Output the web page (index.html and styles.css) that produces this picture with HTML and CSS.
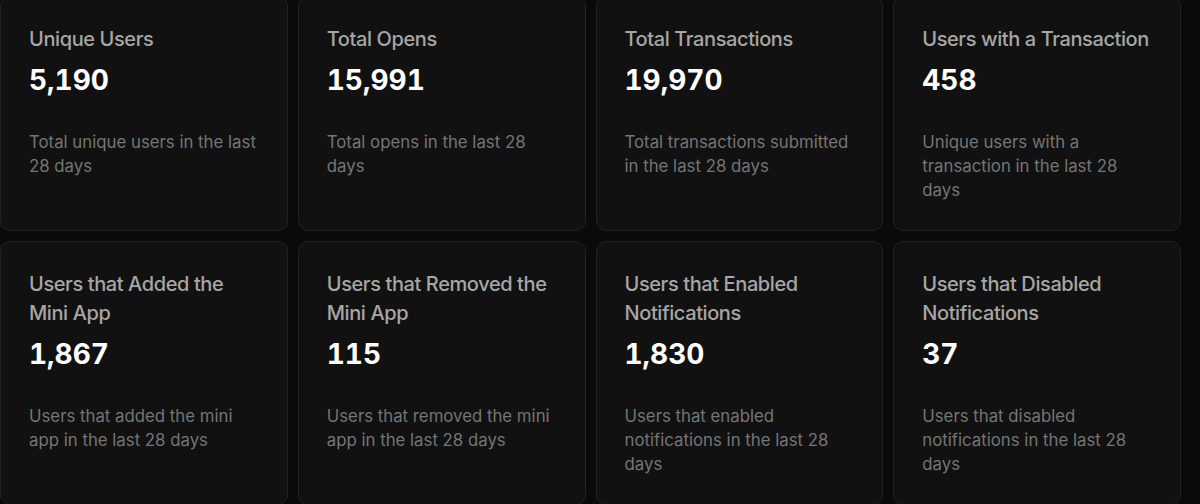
FILE: index.html
```html
<!DOCTYPE html>
<html lang="en">
<head>
<meta charset="utf-8">
<title>Mini App Analytics</title>
<link rel="stylesheet" href="styles.css">
</head>
<body>
<div class="grid">
  <div class="card">
    <div class="title">Unique Users</div>
    <div class="value">5,190</div>
    <div class="desc">Total unique users in the last 28 days</div>
  </div>
  <div class="card">
    <div class="title">Total Opens</div>
    <div class="value">15,991</div>
    <div class="desc">Total opens in the last 28 days</div>
  </div>
  <div class="card">
    <div class="title">Total Transactions</div>
    <div class="value">19,970</div>
    <div class="desc">Total transactions submitted in the last 28 days</div>
  </div>
  <div class="card">
    <div class="title">Users with a Transaction</div>
    <div class="value">458</div>
    <div class="desc">Unique users with a transaction in the last 28 days</div>
  </div>
  <div class="card">
    <div class="title">Users that Added the Mini App</div>
    <div class="value">1,867</div>
    <div class="desc">Users that added the mini app in the last 28 days</div>
  </div>
  <div class="card">
    <div class="title">Users that Removed the Mini App</div>
    <div class="value">115</div>
    <div class="desc">Users that removed the mini app in the last 28 days</div>
  </div>
  <div class="card">
    <div class="title">Users that Enabled Notifications</div>
    <div class="value">1,830</div>
    <div class="desc">Users that enabled notifications in the last 28 days</div>
  </div>
  <div class="card">
    <div class="title">Users that Disabled Notifications</div>
    <div class="value">37</div>
    <div class="desc">Users that disabled notifications in the last 28 days</div>
  </div>
</div>
</body>
</html>
```

FILE: styles.css
```css
html, body {
  margin: 0;
  padding: 0;
  background: #0a0a0a;
  font-family: Inter, "Noto Sans", sans-serif;
  overflow: hidden;
}

.grid {
  display: grid;
  grid-template-columns: repeat(4, 1fr);
  gap: 10px;
  width: 1181px;
  margin-top: -4px;
}

.card {
  background: #111111;
  border: 1px solid #222226;
  border-radius: 10px;
  padding: 28px;
  display: flex;
  flex-direction: column;
}

.title {
  font-size: 20px;
  line-height: 29px;
  font-weight: 500;
  letter-spacing: -0.4px;
  color: #a6a6a6;
}

.value {
  margin-top: 8px;
  font-size: 28px;
  line-height: 36px;
  font-weight: 700;
  font-variant-numeric: tabular-nums;
  color: #ffffff;
}

.desc {
  margin-top: 32px;
  font-size: 16.8px;
  line-height: 24px;
  color: #757575;
}
```
